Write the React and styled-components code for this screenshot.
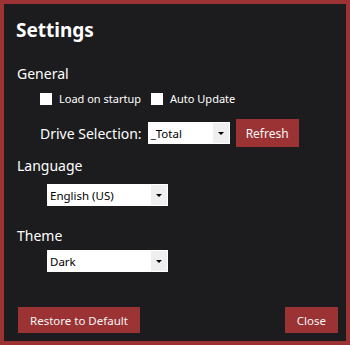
import styled, { createGlobalStyle } from 'styled-components';

const GlobalStyle = createGlobalStyle`
	html, body {
		margin: 0;
		padding: 0;
		background: #1c1c1e;
	}
	* {
		box-sizing: border-box;
	}
`;

function Dropdown({ value, width }) {
	return (
		<SelectBox width={width}>
			<span className="value">{value}</span>
			<span className="arrow">
				<svg width="6" height="3" viewBox="0 0 6 3">
					<path d="M0 0h6L3 3z" fill="#000" />
				</svg>
			</span>
		</SelectBox>
	);
}

function Check({ label }) {
	return (
		<CheckLabel>
			<span className="box" />
			{label}
		</CheckLabel>
	);
}

function App() {
	return (
		<>
			<GlobalStyle />
			<Panel>
				<Title>Settings</Title>
				<Section gap={24}>
					<SectionTitle>General</SectionTitle>
					<CheckRow>
						<Check label="Load on startup" />
						<Check label="Auto Update" />
					</CheckRow>
					<DriveRow>
						<DriveLabel>Drive Selection:</DriveLabel>
						<Dropdown value="_Total" width={82} />
						<RedButton>Refresh</RedButton>
					</DriveRow>
				</Section>
				<Section gap={10}>
					<SectionTitle>Language</SectionTitle>
					<Indent top={9}>
						<Dropdown value="English (US)" width={121} />
					</Indent>
				</Section>
				<Section gap={21}>
					<SectionTitle>Theme</SectionTitle>
					<Indent top={5}>
						<Dropdown value="Dark" width={121} />
					</Indent>
				</Section>
				<Footer>
					<RedButton small>Restore to Default</RedButton>
					<RedButton small>Close</RedButton>
				</Footer>
			</Panel>
		</>
	);
}

const Panel = styled.div`
	width: 350px;
	height: 345px;
	border: 4px solid #9b3335;
	background: #1c1c1e;
	color: #ffffff;
	font-family: 'Noto Sans', 'DejaVu Sans', sans-serif;
	padding: 15px 8px 8px 13px;
	display: flex;
	flex-direction: column;
`;

const Title = styled.h1`
	margin: 0;
	font-size: 19px;
	font-weight: 700;
	line-height: 22px;
	margin-left: -1px;
`;

const Section = styled.div`
	display: flex;
	flex-direction: column;
	margin-top: ${(props) => props.gap}px;
`;

const SectionTitle = styled.div`
	font-size: 14px;
	line-height: 18px;
`;

const CheckRow = styled.div`
	display: flex;
	gap: 10px;
	margin: 9px 0 0 23px;
`;

const CheckLabel = styled.label`
	display: flex;
	align-items: center;
	font-size: 11px;
	line-height: 14px;
	.box {
		width: 12px;
		height: 12px;
		background: #ffffff;
		margin-right: 7px;
	}
`;

const DriveRow = styled.div`
	display: flex;
	align-items: center;
	margin: 13px 0 0 23px;
`;

const DriveLabel = styled.span`
	font-size: 14px;
	margin-right: 6px;
`;

const Indent = styled.div`
	margin: ${(props) => props.top}px 0 0 30px;
`;

const SelectBox = styled.div`
	width: ${(props) => props.width}px;
	height: 22px;
	background: #ffffff;
	border: 1px solid #ffffff;
	color: #000000;
	display: flex;
	align-items: center;
	font-size: 11.5px;
	.value {
		flex: 1;
		padding-left: 2px;
	}
	.arrow {
		width: 16px;
		height: 100%;
		background: #efefef;
		display: flex;
		align-items: center;
		justify-content: center;
	}
`;

const RedButton = styled.button`
	background: #9b3335;
	color: #f4f4f4;
	border: none;
	font-family: inherit;
	font-size: ${(props) => (props.small ? '11.5px' : '12px')};
	height: ${(props) => (props.small ? '26px' : '28px')};
	padding: 0 ${(props) => (props.small ? '12px' : '10px')};
	margin-left: ${(props) => (props.small ? '0' : '6px')};
`;

const Footer = styled.div`
	margin-top: auto;
	display: flex;
	justify-content: space-between;
	padding-left: 1px;
`;

export default App;
